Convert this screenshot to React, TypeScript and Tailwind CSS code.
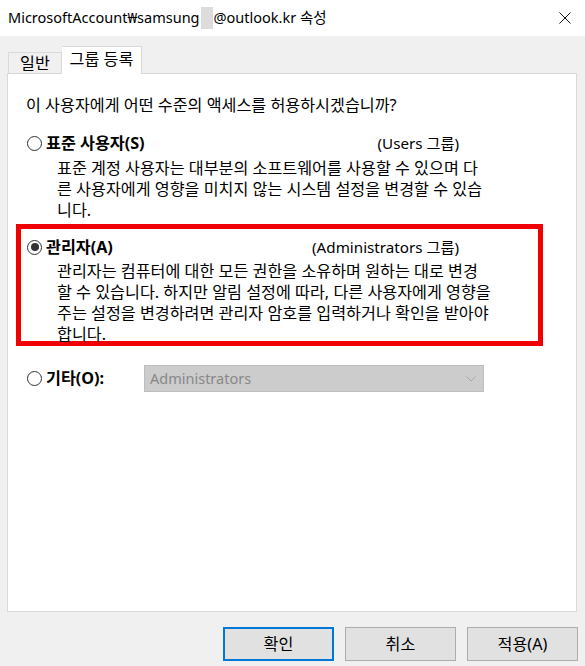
import React from 'react';

function Radio({ checked }: { checked?: boolean }) {
  return (
    <span className="w-[15px] h-[15px] rounded-full border border-[#333] bg-white flex items-center justify-center shrink-0">
      {checked && <span className="w-[8px] h-[8px] rounded-full bg-[#333]" />}
    </span>
  );
}

function Desc({ lines }: { lines: string[] }) {
  return (
    <div className="pl-[30px]">
      {lines.map((l, i) => (
        <div key={i} className="h-[21px] leading-[21px] whitespace-nowrap">{l}</div>
      ))}
    </div>
  );
}

export default function App() {
  return (
    <div className="w-[585px] h-[666px] bg-[#f0f0f0] flex flex-col text-black font-['Noto_Sans','Noto_Sans_CJK_KR',sans-serif] text-[16.2px] overflow-hidden">
      {/* title bar */}
      <div className="h-[36px] bg-white flex items-center justify-between pl-[8px] pr-[13px] shrink-0">
        <div className="text-[14.5px] flex items-center whitespace-nowrap">
          <span>MicrosoftAccount₩samsung</span>
          <span className="inline-block w-[12px] h-[22px] bg-[#dcdcdc] mx-[1px]" />
          <span>@outlook.kr 속성</span>
        </div>
        <svg width="12" height="12" viewBox="0 0 12 12" className="mr-[1px]">
          <path d="M0.5 0.5 L11.5 11.5 M11.5 0.5 L0.5 11.5" stroke="#111" strokeWidth="1" />
        </svg>
      </div>

      {/* tabs */}
      <div className="flex items-end pl-[8px] mt-[10px] h-[27px] shrink-0 relative z-10">
        <div className="w-[54px] h-[21px] border border-b-0 border-[#d9d9d9] bg-[#f0f0f0] flex items-center justify-center">
          일반
        </div>
        <div className="w-[80px] h-[28px] border border-b-0 border-l-0 border-[#d9d9d9] bg-white flex items-center justify-center -mb-px pb-[2px]">
          그룹 등록
        </div>
      </div>

      {/* panel */}
      <div className="ml-[7px] w-[570px] h-[539px] bg-white border border-[#d9d9d9] shrink-0">
        <div className="pt-[20px] pl-[18px] h-[42px] leading-[22px] whitespace-nowrap">
          이 사용자에게 어떤 수준의 액세스를 허용하시겠습니까?
        </div>

        <div className="mt-[16px] pl-[19px]">
          <div className="h-[22px] flex items-center">
            <Radio />
            <span className="ml-[4px] font-bold w-[205px] whitespace-nowrap">표준 사용자(S)</span>
            <span className="w-[208px] text-right whitespace-nowrap text-[15.2px]">(Users 그룹)</span>
          </div>
          <div className="mt-[4px]">
            <Desc
              lines={[
                '표준 계정 사용자는 대부분의 소프트웨어를 사용할 수 있으며 다',
                '른 사용자에게 영향을 미치지 않는 시스템 설정을 변경할 수 있습',
                '니다.',
              ]}
            />
          </div>
        </div>

        <div className="mt-[3px] ml-[8px] w-[527px] h-[122px] border-[5px] border-[#f00000] pl-[6px] pt-[7px]">
          <div className="h-[22px] flex items-center">
            <Radio checked />
            <span className="ml-[4px] font-bold w-[205px] whitespace-nowrap">관리자(A)</span>
            <span className="w-[208px] text-right whitespace-nowrap text-[15.2px]">(Administrators 그룹)</span>
          </div>
          <div className="mt-[3px]">
            <Desc
              lines={[
                '관리자는 컴퓨터에 대한 모든 권한을 소유하며 원하는 대로 변경',
                '할 수 있습니다. 하지만 알림 설정에 따라, 다른 사용자에게 영향을',
                '주는 설정을 변경하려면 관리자 암호를 입력하거나 확인을 받아야',
                '합니다.',
              ]}
            />
          </div>
        </div>

        <div className="mt-[19px] pl-[19px] flex items-center">
          <Radio />
          <span className="ml-[4px] font-bold w-[98px] whitespace-nowrap">기타(O):</span>
          <div className="w-[340px] h-[27px] bg-[#cccccc] border border-[#bdbdbd] flex items-center justify-between pl-[5px] pr-[7px] text-[#888] text-[14.5px]">
            <span>Administrators</span>
            <svg width="10" height="6" viewBox="0 0 10 6">
              <path d="M0.5 0.5 L5 5 L9.5 0.5" fill="none" stroke="#a8a8a8" strokeWidth="1" />
            </svg>
          </div>
        </div>
      </div>

      {/* buttons */}
      <div className="flex justify-end gap-[11px] pr-[7px] mt-[15px]">
        <button className="w-[111px] h-[34px] bg-[#e1e1e1] border-2 border-[#0078d7] flex items-center justify-center">
          확인
        </button>
        <button className="w-[111px] h-[34px] bg-[#e1e1e1] border border-[#adadad] flex items-center justify-center">
          취소
        </button>
        <button className="w-[111px] h-[34px] bg-[#e1e1e1] border border-[#adadad] flex items-center justify-center">
          적용(A)
        </button>
      </div>
    </div>
  );
}
